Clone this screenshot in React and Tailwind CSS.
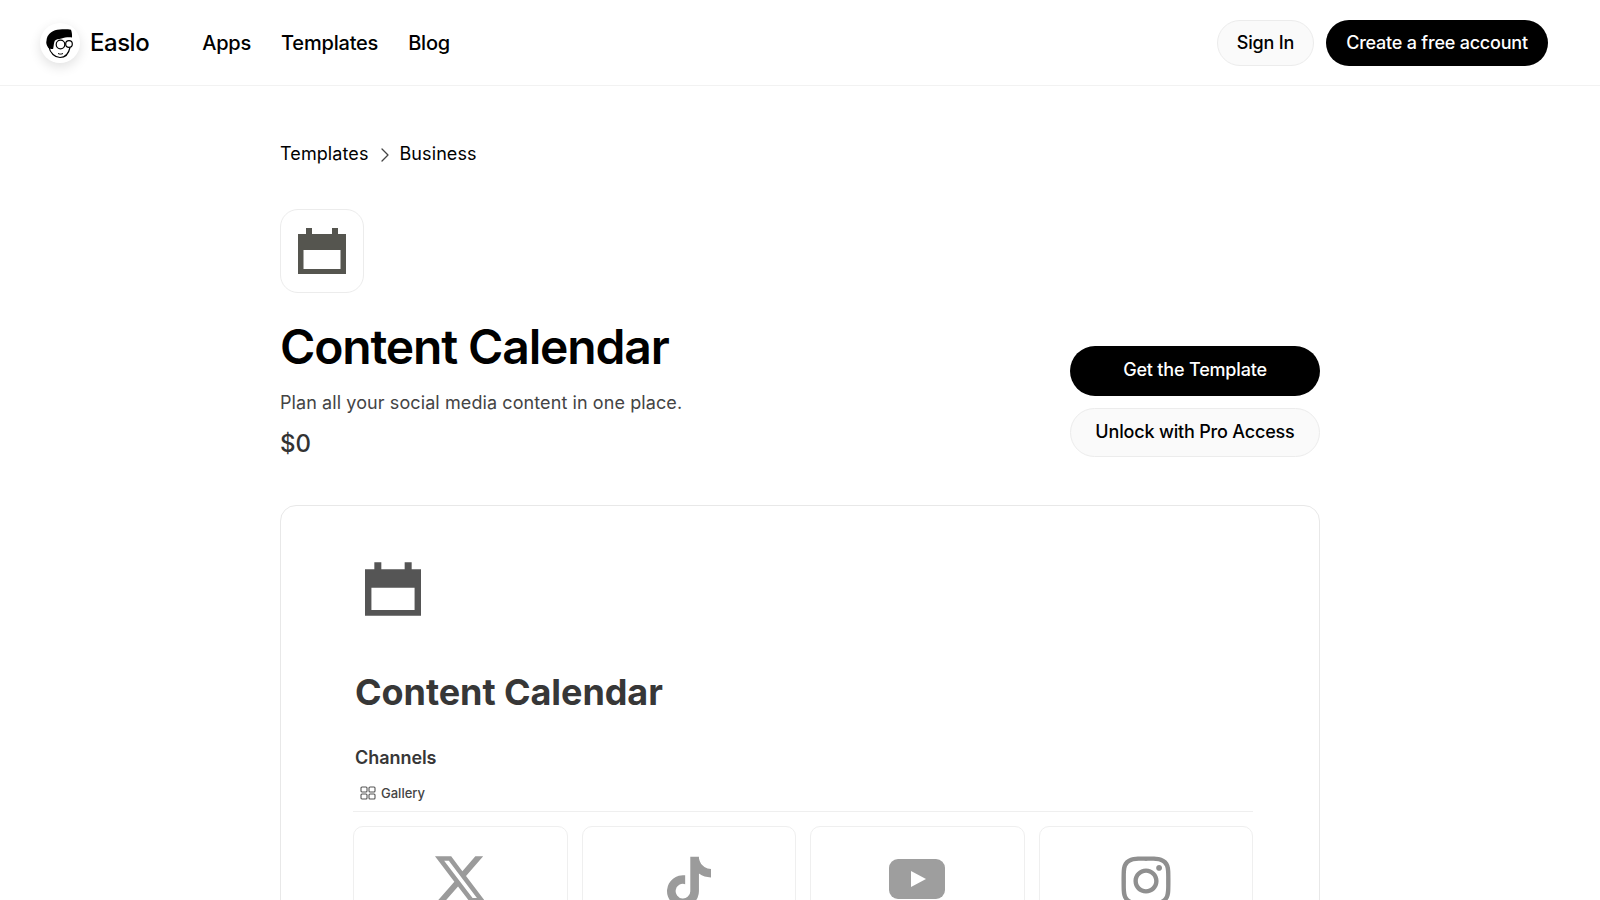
import React from "react";
import { ChevronRight } from "lucide-react";
import { FaXTwitter, FaTiktok, FaInstagram } from "react-icons/fa6";

function CalendarIcon({ className }) {
  return (
    <svg viewBox="0 0 48 46" className={className} fill="currentColor">
      <path fillRule="evenodd" d="M8 0h6v6h20V0h6v6h8v40H0V6h8V0zM5.500 22v19h37V22h-37z" />
    </svg>
  );
}

function Logo() {
  return (
    <div className="w-10 h-10 rounded-full bg-white shadow-[0_4px_12px_rgba(0,0,0,0.12)] shrink-0">
      <svg viewBox="0 0 40 40" className="w-10 h-10">
        <path d="M9 24c1 6 6 10.500 11 10.500s8.500-3 10-10" fill="none" stroke="#000" strokeWidth="1.200" />
        <path d="M7.800 13C9.500 10 12 8.200 15 7.200c5-1 11.500-1 16-.5 1 2.500 1.200 5.500 1 7.700-3.500-.5-7.500 0-10.500 1-3 .5-5.700 1-6.700 2.300-1 2-1 5-1.700 8.300-2.500 0-4-.5-5-1.600-1.500-2-2.300-4.700-1.600-6.700.2-1.700.4-3 1.300-5z" fill="#000" />
        <circle cx="20.500" cy="21.500" r="4.300" fill="#fff" stroke="#000" strokeWidth="1.200" />
        <circle cx="29" cy="21" r="3.300" fill="#fff" stroke="#000" strokeWidth="1.200" />
        <path d="M24.800 21.200h.9" stroke="#000" strokeWidth="1.200" />
        <path d="M18 30.500c1.500.8 3.500.8 5 0" fill="none" stroke="#000" strokeWidth="1" />
      </svg>
    </div>
  );
}

function ChannelCard({ children }) {
  return (
    <div className="h-[120px] rounded-[10px] border border-[#efefef] flex justify-center pt-[29px] overflow-hidden">
      {children}
    </div>
  );
}

export default function App() {
  return (
    <div className="h-[900px] overflow-hidden bg-white text-black font-['Inter',sans-serif]">
      <header className="h-[86px] border-b border-[#f2f2f2] flex items-center justify-between pl-10 pr-[52px]">
        <div className="flex items-center">
          <Logo />
          <span className="ml-[10px] text-[24px] leading-8 font-medium tracking-[-0.02em]">Easlo</span>
          <nav className="ml-[53px] flex items-center gap-[30px] text-[20px] leading-7 font-medium tracking-[-0.01em]">
            <span>Apps</span>
            <span>Templates</span>
            <span>Blog</span>
          </nav>
        </div>
        <div className="flex items-center gap-3">
          <div className="h-[46px] w-[97px] rounded-full border border-[#ececec] bg-[#fafafa] flex items-center justify-center pb-[1px] text-[18px] font-medium tracking-[-0.01em]">Sign In</div>
          <div className="h-[46px] w-[222px] rounded-full bg-black text-white flex items-center justify-center pb-[1px] text-[18px] font-medium tracking-[-0.012em]">Create a free account</div>
        </div>
      </header>

      <main className="w-[1040px] mx-auto">
        <div className="pt-[54px] flex items-center text-[18px] leading-7 text-black tracking-[0.005em]">
          <span>Templates</span>
          <ChevronRight className="w-6 h-6 ml-[5px] mr-[2px] mt-[2px] text-[#444]" strokeWidth={1.300} />
          <span>Business</span>
        </div>

        <div className="mt-[41px] w-[84px] h-[84px] rounded-[18px] border border-[#ececec] flex items-center justify-center text-[#55554f]">
          <CalendarIcon className="w-12 h-[46px]" />
        </div>

        <div className="flex justify-between items-start">
          <div>
            <h1 className="mt-[24px] text-[48px] leading-[60px] font-semibold tracking-[-0.024em]">Content Calendar</h1>
            <p className="mt-[12px] text-[18px] leading-7 text-[#444] tracking-[0.005em]">Plan all your social media content in one place.</p>
            <p className="mt-[11px] text-[24px] leading-8 font-medium text-[#333]">$0</p>
          </div>
          <div className="mt-[53px] w-[250px] flex flex-col gap-3">
            <div className="h-[50px] rounded-full bg-black text-white flex items-center justify-center pb-1 text-[18px] font-medium tracking-[-0.01em]">Get the Template</div>
            <div className="h-[49px] rounded-full border border-[#ececec] bg-[#fafafa] flex items-center justify-center pb-[2px] text-[18px] font-medium tracking-[-0.01em]">Unlock with Pro Access</div>
          </div>
        </div>

        <section className="mt-[45px] h-[500px] rounded-[16px] border border-[#e8e8e8] pl-[72px] pr-[66px] pt-[56px]">
          <CalendarIcon className="ml-[12px] w-[56px] h-[54px] text-[#555]" />
          <h2 className="mt-[50px] ml-[2px] text-[36px] leading-[52px] font-bold text-[#373737] tracking-[-0.002em]">Content Calendar</h2>
          <h3 className="mt-[26px] ml-[2px] text-[18px] leading-7 font-semibold text-[#373737] tracking-[-0.003em]">Channels</h3>
          <div className="mt-[11px] ml-[7px] flex items-center gap-[5px] text-[13px] leading-5 font-medium text-[#444]">
            <svg viewBox="0 0 16 14" className="w-4 h-[14px]" fill="none" stroke="#555" strokeWidth="1.100">
              <rect x="1" y="1" width="6" height="5" rx="1" />
              <rect x="9" y="1" width="6" height="5" rx="1" />
              <rect x="1" y="8" width="6" height="5" rx="1" />
              <rect x="9" y="8" width="6" height="5" rx="1" />
            </svg>
            <span>Gallery</span>
          </div>
          <div className="mt-[8px] border-t border-[#efefef]">
            <div className="mt-[14px] grid grid-cols-4 gap-[14px]">
              <ChannelCard><FaXTwitter className="w-[57px] h-[57px] mt-[-5px] text-[#9b9b9b]" /></ChannelCard>
              <ChannelCard><FaTiktok className="w-[44px] h-[52px] text-[#9b9b9b]" /></ChannelCard>
              <ChannelCard>
                <svg viewBox="0 0 56 40" className="w-14 h-10 mt-[3px]">
                  <rect x="0" y="0" width="56" height="40" rx="9" fill="#9e9e9e" />
                  <path d="M22 12l15 8-15 8z" fill="#fff" />
                </svg>
              </ChannelCard>
              <ChannelCard><FaInstagram className="w-[56px] h-[56px] mt-[-3px] text-[#8f8f8f]" /></ChannelCard>
            </div>
          </div>
        </section>
      </main>
    </div>
  );
}
